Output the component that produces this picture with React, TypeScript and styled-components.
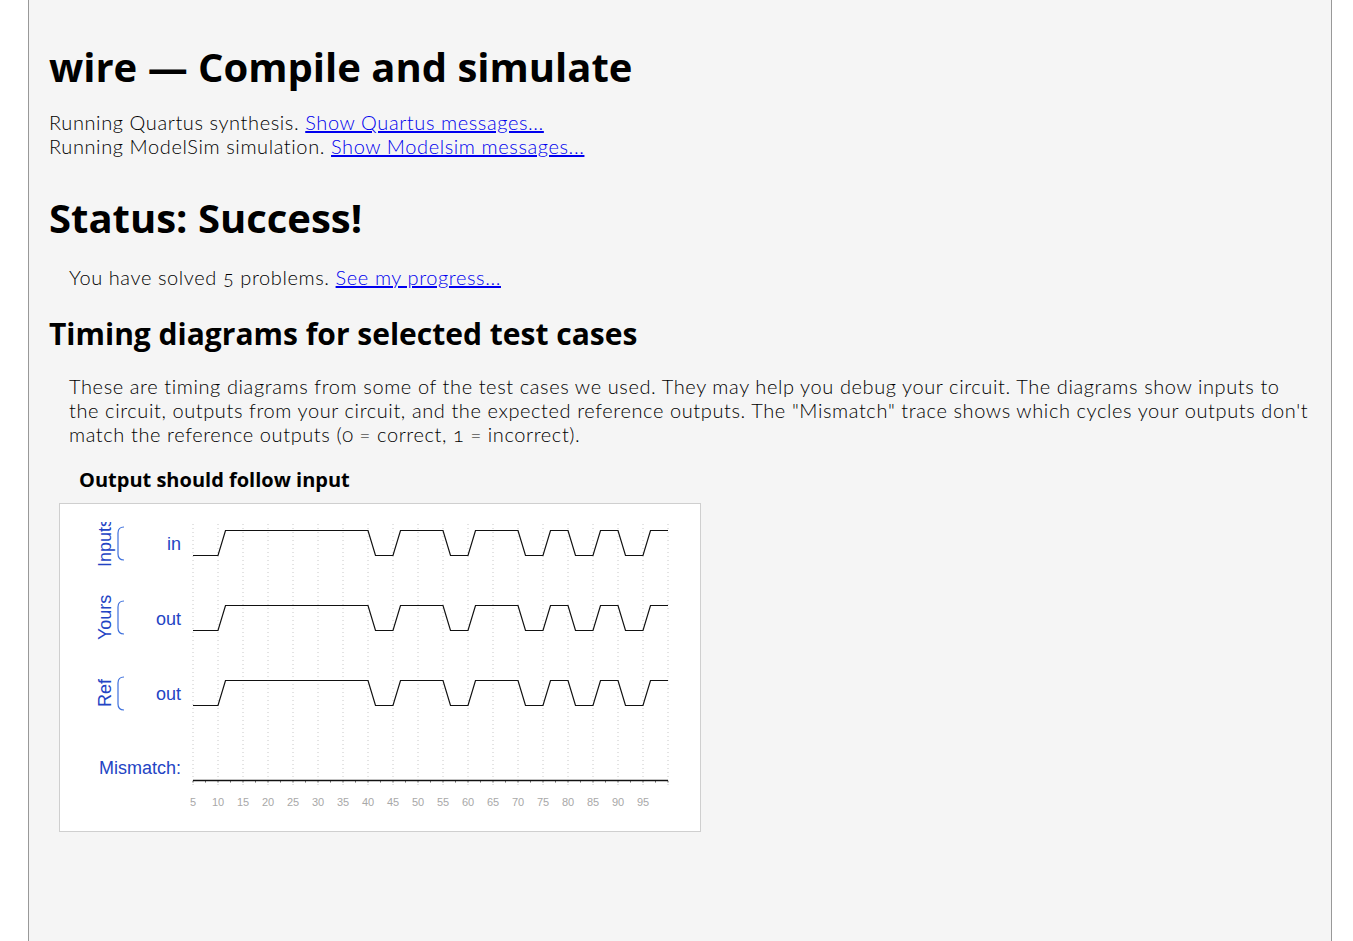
import styled, { createGlobalStyle } from 'styled-components';

const GlobalStyle = createGlobalStyle`
  html, body {
    margin: 0;
    padding: 0;
    background: #ffffff;
  }
`;

// clock edges of the test vector, in simulation time units
const edges = [10, 40, 45, 55, 60, 70, 75, 80, 85, 90, 95];
const T_START = 5;
const T_END = 100;
const RAMP = 7.5;

const tx = (t: number) => 108 + t * 5;

function wavePath(high: number, low: number, startHigh = false) {
  let level = startHigh;
  let d = `M${tx(T_START)},${level ? high : low}`;
  edges.forEach((t) => {
    const x = tx(t);
    d += ` L${x},${level ? high : low}`;
    level = !level;
    d += ` L${x + RAMP},${level ? high : low}`;
  });
  d += ` L${tx(T_END)},${level ? high : low}`;
  return d;
}

const gridTimes = Array.from({ length: 20 }, (_, i) => 5 + i * 5);
const halfTicks = Array.from({ length: 39 }, (_, i) => 5 + i * 2.5);

const groups = [
  { name: 'Inputs', signal: 'in', high: 26.5, low: 51.5, labelY: 63, braceTop: 23 },
  { name: 'Yours', signal: 'out', high: 101.5, low: 126.5, labelY: 136, braceTop: 97 },
  { name: 'Ref', signal: 'out', high: 176.5, low: 201.5, labelY: 203, braceTop: 173 },
];

const LABEL_FONT = "'Liberation Sans', Arial, sans-serif";

export default function App() {
  return (
    <>
      <GlobalStyle />
      <Page>
        <Title>wire — Compile and simulate</Title>
        <Log>
          Running Quartus synthesis. <a href="#">Show Quartus messages...</a>
          <br />
          Running ModelSim simulation. <a href="#">Show Modelsim messages...</a>
        </Log>

        <Status>Status: Success!</Status>
        <Indented $gap={23}>
          You have solved 5 problems. <a href="#">See my progress...</a>
        </Indented>

        <SubTitle>Timing diagrams for selected test cases</SubTitle>
        <Indented $gap={22}>
          These are timing diagrams from some of the test cases we used. They
          may help you debug your circuit. The diagrams show inputs to the
          circuit, outputs from your circuit, and the expected reference
          outputs. The "Mismatch" trace shows which cycles your outputs don't
          match the reference outputs (0 = correct, 1 = incorrect).
        </Indented>

        <CaseTitle>Output should follow input</CaseTitle>
        <Diagram>
          <svg width="640" height="327" viewBox="0 0 640 327">
            <defs>
              <clipPath id="lblclip">
                <rect x="0" y="18" width="120" height="300" />
              </clipPath>
            </defs>

            {gridTimes.map((t) => (
              <line
                key={t}
                x1={tx(t)}
                x2={tx(t)}
                y1={20}
                y2={281}
                stroke="#c8c8c8"
                strokeWidth={1}
                strokeDasharray="1 3"
              />
            ))}

            {groups.map((g) => (
              <g key={g.name}>
                <g clipPath="url(#lblclip)">
                  <text
                    transform={`translate(51 ${g.labelY}) rotate(-90)`}
                    fontFamily={LABEL_FONT}
                    fontSize="18"
                    fill="#2344c4"
                  >
                    {g.name}
                  </text>
                </g>
                <path
                  d={`M64,${g.braceTop} Q58,${g.braceTop} 58,${g.braceTop + 6} L58,${g.braceTop + 27} Q58,${g.braceTop + 33} 64,${g.braceTop + 33}`}
                  fill="none"
                  stroke="#3c6fdc"
                  strokeWidth={1.2}
                />
                <text
                  x={121}
                  y={g.low - 5.5}
                  textAnchor="end"
                  fontFamily={LABEL_FONT}
                  fontSize="18"
                  fill="#2344c4"
                >
                  {g.signal}
                </text>
                <path
                  d={wavePath(g.high, g.low)}
                  fill="none"
                  stroke="#111"
                  strokeWidth={1.2}
                />
              </g>
            ))}

            <text
              x={121}
              y={270}
              textAnchor="end"
              fontFamily={LABEL_FONT}
              fontSize="18"
              fill="#2344c4"
            >
              Mismatch:
            </text>
            <line
              x1={tx(T_START)}
              x2={tx(T_END)}
              y1={276.5}
              y2={276.5}
              stroke="#111"
              strokeWidth={1.4}
            />
            {halfTicks.map((t) => (
              <line
                key={t}
                x1={tx(t)}
                x2={tx(t)}
                y1={277}
                y2={278.5}
                stroke="#555"
                strokeWidth={1}
              />
            ))}

            {gridTimes.slice(0, 19).map((t) => (
              <text
                key={t}
                x={tx(t)}
                y={302}
                textAnchor="middle"
                fontFamily={LABEL_FONT}
                fontSize="11"
                fill="#a8a8a8"
              >
                {t}
              </text>
            ))}
          </svg>
        </Diagram>
      </Page>
    </>
  );
}

const Page = styled.div`
  box-sizing: border-box;
  margin: 0 21px 0 28px;
  min-height: 100vh;
  padding: 43px 20px 40px 20px;
  background: #f5f5f5;
  border-left: 1px solid #999;
  border-right: 1px solid #999;
  font-family: 'Lato', 'Open Sans', sans-serif;
  font-weight: 300;
  font-size: 20px;
  line-height: 24px;
  letter-spacing: 0.6px;
  color: #000;
  font-variant-numeric: oldstyle-nums;

  a {
    color: #0000ee;
  }
`;

const Heading = styled.h1`
  margin: 0;
  font-family: 'Open Sans', 'Noto Sans', sans-serif;
  font-weight: 700;
  letter-spacing: 0;
  color: #000;
`;

const Title = styled(Heading)`
  font-size: 40px;
  line-height: 48px;
`;

const Status = styled(Heading).attrs({ as: 'h2' })`
  margin-top: 36px;
  font-size: 40px;
  line-height: 48px;
`;

const SubTitle = styled(Heading).attrs({ as: 'h3' })`
  margin-top: 27px;
  font-size: 30px;
  line-height: 36px;
`;

const CaseTitle = styled(Heading).attrs({ as: 'h4' })`
  margin: 22px 0 0 30px;
  font-size: 20px;
  line-height: 24px;
`;

const Log = styled.p`
  margin: 19px 0 0 0;
`;

const Indented = styled.p<{ $gap: number }>`
  margin: ${(p) => p.$gap}px 0 0 20px;
`;

const Diagram = styled.div`
  display: inline-block;
  margin: 11px 0 0 10px;
  background: #fff;
  border: 1px solid #cfcfcf;
  line-height: 0;
  letter-spacing: 0;

  svg {
    display: block;
  }
`;
